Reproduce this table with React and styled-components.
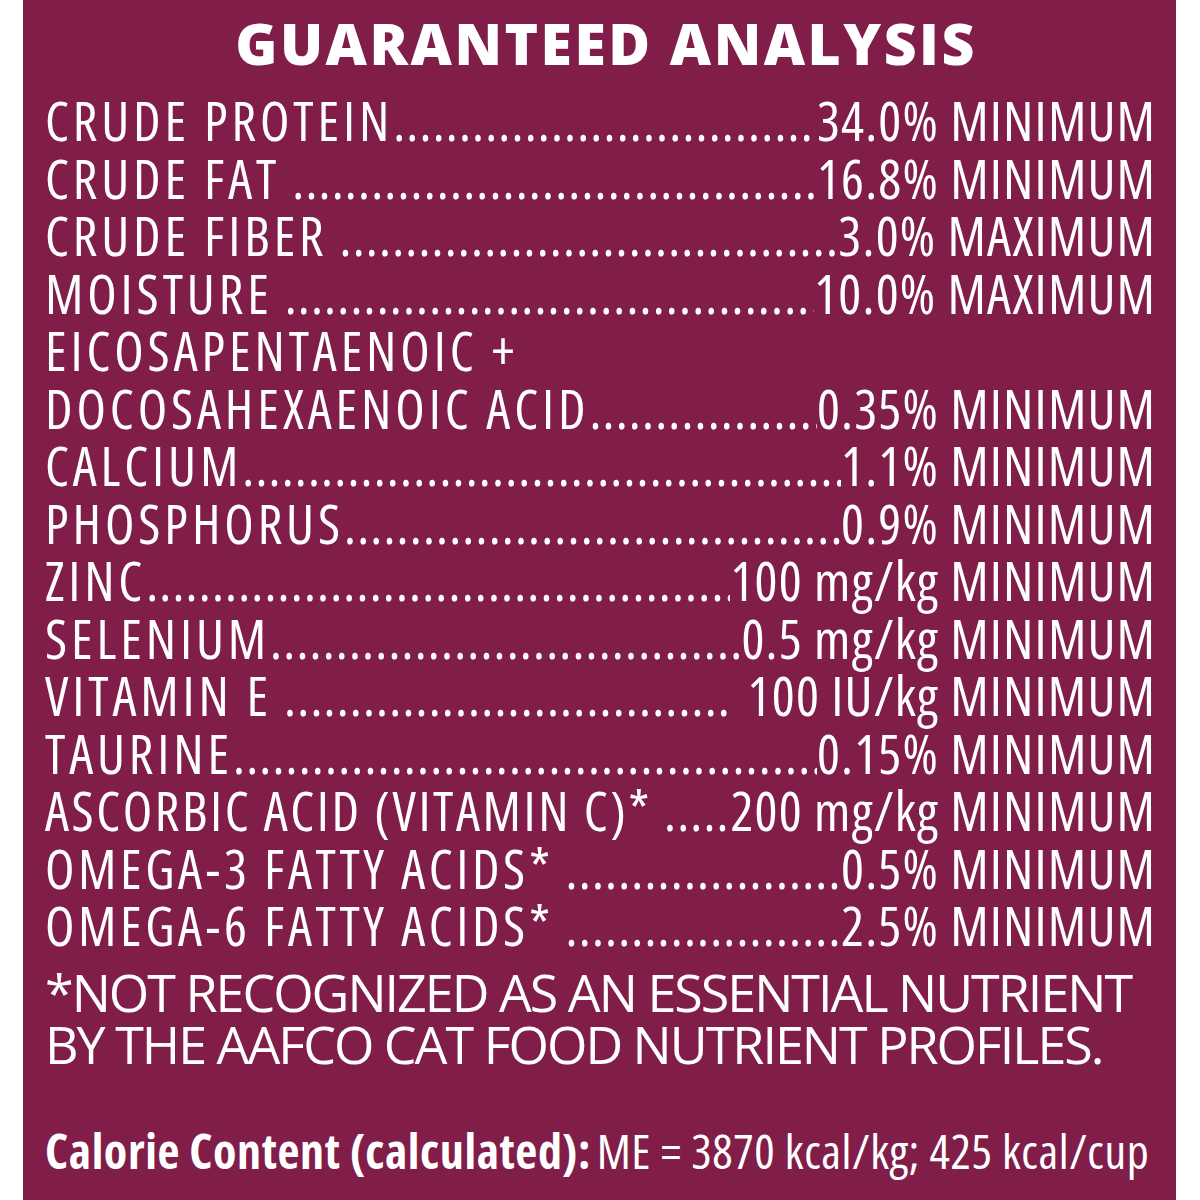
import styled, { createGlobalStyle } from 'styled-components';

const GlobalStyle = createGlobalStyle`
  body {
    margin: 0;
    background: #fff;
  }
`;

const Panel = styled.div`
  box-sizing: border-box;
  width: 1153px;
  height: 1200px;
  margin-left: 23px;
  padding: 15px 21px 0 22px;
  background: #811d49;
  color: #fff;
  font-family: "Open Sans", "Liberation Sans", sans-serif;
  overflow: hidden;
`;

const Title = styled.h1`
  margin: 0 0 21px;
  padding-left: 12px;
  font-weight: 800;
  font-size: 57px;
  line-height: 56px;
  text-align: center;
  letter-spacing: 2.5px;
`;

const List = styled.div`
  display: flex;
  flex-direction: column;
`;

// condensed face: only 75% / 100% widths are installed
const Row = styled.div`
  display: flex;
  align-items: baseline;
  height: 57.5px;
  font-size: 54px;
  line-height: 57.5px;
  font-stretch: 75%;
  white-space: nowrap;
`;

const Label = styled.span`
  flex: none;
  letter-spacing: ${(p) => p.$track || '3.9px'};
  padding-right: ${(p) => (p.$space ? '12px' : '0')};
`;

const Leader = styled.span`
  flex: 1 1 0;
  min-width: 0;
  overflow: hidden;
  letter-spacing: 1.2px;
`;

const Value = styled.span`
  flex: none;
  margin-right: -1.2px;
  letter-spacing: 1.2px;
  padding-left: ${(p) => (p.$space ? '14px' : '0')};
`;

const Note = styled.p`
  margin: 11px 0 0;
  font-size: 52px;
  line-height: 52px;
  letter-spacing: -2px;
  white-space: nowrap;
`;

const Calorie = styled.p`
  margin: 55px 0 0;
  font-size: 48px;
  line-height: 52px;
  font-stretch: 75%;
  letter-spacing: 0.6px;
  white-space: nowrap;
`;

const Strong = styled.b`
  font-weight: 700;
  margin-right: -4px;
`;

const DOTS = '.'.repeat(120);

const rows = [
  { label: 'CRUDE PROTEIN', value: '34.0% MINIMUM' },
  { label: 'CRUDE FAT', value: '16.8% MINIMUM', sl: true },
  { label: 'CRUDE FIBER', value: '3.0% MAXIMUM', sl: true },
  { label: 'MOISTURE', value: '10.0% MAXIMUM', sl: true },
  { label: 'EICOSAPENTAENOIC +' },
  { label: 'DOCOSAHEXAENOIC ACID', value: '0.35% MINIMUM' },
  { label: 'CALCIUM', value: '1.1% MINIMUM' },
  { label: 'PHOSPHORUS', value: '0.9% MINIMUM' },
  { label: 'ZINC', value: '100 mg/kg MINIMUM' },
  { label: 'SELENIUM', value: '0.5 mg/kg MINIMUM' },
  { label: 'VITAMIN E', value: '100 IU/kg MINIMUM', sl: true, sv: true },
  { label: 'TAURINE', value: '0.15% MINIMUM' },
  { label: 'ASCORBIC ACID (VITAMIN C)*', value: '200 mg/kg MINIMUM', sl: true, track: '2.6px' },
  { label: 'OMEGA-3 FATTY ACIDS*', value: '0.5% MINIMUM', sl: true, track: '3.6px' },
  { label: 'OMEGA-6 FATTY ACIDS*', value: '2.5% MINIMUM', sl: true, track: '3.6px' },
];

export default function App() {
  return (
    <>
      <GlobalStyle />
      <Panel>
        <Title>GUARANTEED ANALYSIS</Title>
        <List>
          {rows.map((r) => (
            <Row key={r.label}>
              <Label $space={r.sl} $track={r.track}>{r.label}</Label>
              {r.value && (
                <>
                  <Leader>{DOTS}</Leader>
                  <Value $space={r.sv}>{r.value}</Value>
                </>
              )}
            </Row>
          ))}
        </List>
        <Note>
          *NOT RECOGNIZED AS AN ESSENTIAL NUTRIENT
          <br />
          BY THE AAFCO CAT FOOD NUTRIENT PROFILES.
        </Note>
        <Calorie>
          <Strong>Calorie Content (calculated):</Strong> ME = 3870 kcal/kg; 425 kcal/cup
        </Calorie>
      </Panel>
    </>
  );
}
